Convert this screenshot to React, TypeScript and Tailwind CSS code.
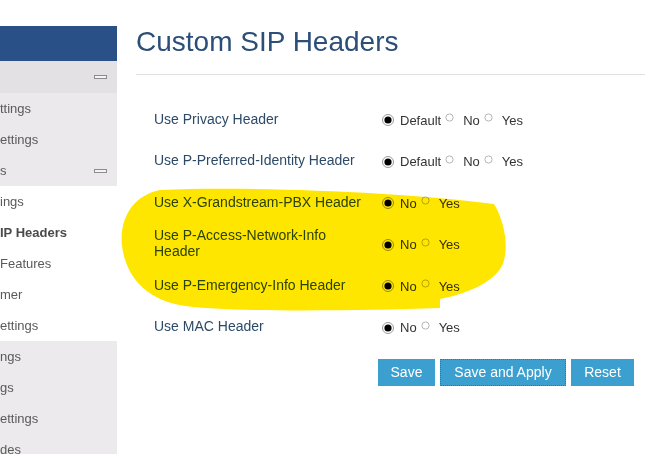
import type { ReactNode } from 'react';

type RadioRowProps = {
  label: ReactNode;
  options: string[];
  checked: string;
};

const font = "font-['Liberation_Sans',Arial,sans-serif]";

function Radio({ on }: { on: boolean }) {
  if (on) {
    return (
      <svg width="12" height="12" viewBox="0 0 12 12" className="shrink-0">
        <circle cx="6" cy="6" r="5.5" fill="#ffffff" stroke="#9a9a9a" />
        <circle cx="6" cy="6" r="3.6" fill="#000000" />
      </svg>
    );
  }
  return (
    <svg width="9" height="9" viewBox="0 0 9 9" className="shrink-0 -mt-[5px]">
      <circle cx="4.5" cy="4.5" r="3.6" fill="#ffffff" stroke="#b5b5b5" />
    </svg>
  );
}

function RadioRow({ label, options, checked }: RadioRowProps) {
  return (
    <div className="flex h-[41.5px] items-center">
      <div className="w-[227px] text-[14px] leading-[16px] text-[#2c4a68]">{label}</div>
      <div className="mt-[3px] flex items-center text-[13px] text-[#333333]">
        {options.map((o) => {
          const on = o === checked;
          return (
            <span key={o} className="flex items-center">
              <span className={on ? 'ml-[1px] mr-[6px]' : 'ml-[4px] mr-[9px]'}>
                <Radio on={on} />
              </span>
              <span>{o}</span>
            </span>
          );
        })}
      </div>
    </div>
  );
}

function Minus() {
  return <span className="block h-[4px] w-[13px] border border-[#8c8c8c] bg-[#f4f4f4]" />;
}

function NavItem({ children, bold, minus }: { children: ReactNode; bold?: boolean; minus?: boolean }) {
  return (
    <div
      className={`flex h-[31px] items-center justify-between pr-[10px] text-[13px] ${
        bold ? 'font-bold text-[#4a4a4a]' : 'text-[#5a5a5a]'
      }`}
    >
      <span>{children}</span>
      {minus ? <Minus /> : null}
    </div>
  );
}

export default function App() {
  return (
    <div className={`relative flex h-[454px] w-[646px] overflow-hidden bg-white ${font}`}>
      <aside className="w-[117px] shrink-0 pt-[26px]">
        <div className="h-[35px] bg-[#2a5088]" />
        <div className="flex h-[32px] items-center justify-end bg-[#e4e1e4] pr-[10px]">
          <Minus />
        </div>
        <div className="bg-[#ece9ec]">
          <NavItem>ttings</NavItem>
          <NavItem>ettings</NavItem>
          <NavItem minus>s</NavItem>
        </div>
        <div>
          <NavItem>ings</NavItem>
          <NavItem bold>IP Headers</NavItem>
          <NavItem> Features</NavItem>
          <NavItem>mer</NavItem>
          <NavItem>ettings</NavItem>
        </div>
        <div className="h-full bg-[#edeaed]">
          <NavItem>ngs</NavItem>
          <NavItem>gs</NavItem>
          <NavItem>ettings</NavItem>
          <NavItem>des</NavItem>
        </div>
      </aside>

      <main className="flex-1 pl-[19px] pr-[1px]">
        <h1 className="mt-[25px] text-[28px] leading-[34px] text-[#2b4f78]">Custom SIP Headers</h1>
        <div className="mt-[15px] h-px bg-[#e2e2e2]" />

        <div className="mt-[23px] pl-[18px]">
          <RadioRow label="Use Privacy Header" options={['Default', 'No', 'Yes']} checked="Default" />
          <RadioRow label="Use P-Preferred-Identity Header" options={['Default', 'No', 'Yes']} checked="Default" />
          <RadioRow label="Use X-Grandstream-PBX Header" options={['No', 'Yes']} checked="No" />
          <RadioRow
            label={
              <>
                Use P-Access-Network-Info
                <br />
                Header
              </>
            }
            options={['No', 'Yes']}
            checked="No"
          />
          <RadioRow label="Use P-Emergency-Info Header" options={['No', 'Yes']} checked="No" />
          <RadioRow label="Use MAC Header" options={['No', 'Yes']} checked="No" />

          <div className="mt-[12px] flex gap-[5px] pl-[224px] text-[14px] text-white">
            <button className="h-[27px] w-[57px] bg-[#3ba0cf]">Save</button>
            <button className="h-[27px] w-[126px] border border-dotted border-[#5a6a72] bg-[#3ba0cf]">
              Save and Apply
            </button>
            <button className="h-[27px] w-[63px] bg-[#3ba0cf]">Reset</button>
          </div>
        </div>
      </main>

      <svg
        className="pointer-events-none absolute left-0 top-0 mix-blend-multiply"
        width="646"
        height="454"
        viewBox="0 0 646 454"
      >
        <path
          d="M160 190 C250 186 400 192 494 204 C504 220 510 248 502 266 C492 284 465 294 440 299 L440 308 C350 311 230 312 185 306 C145 300 126 276 122 246 C119 216 135 195 160 190 Z"
          fill="#ffe600"
        />
      </svg>
    </div>
  );
}
